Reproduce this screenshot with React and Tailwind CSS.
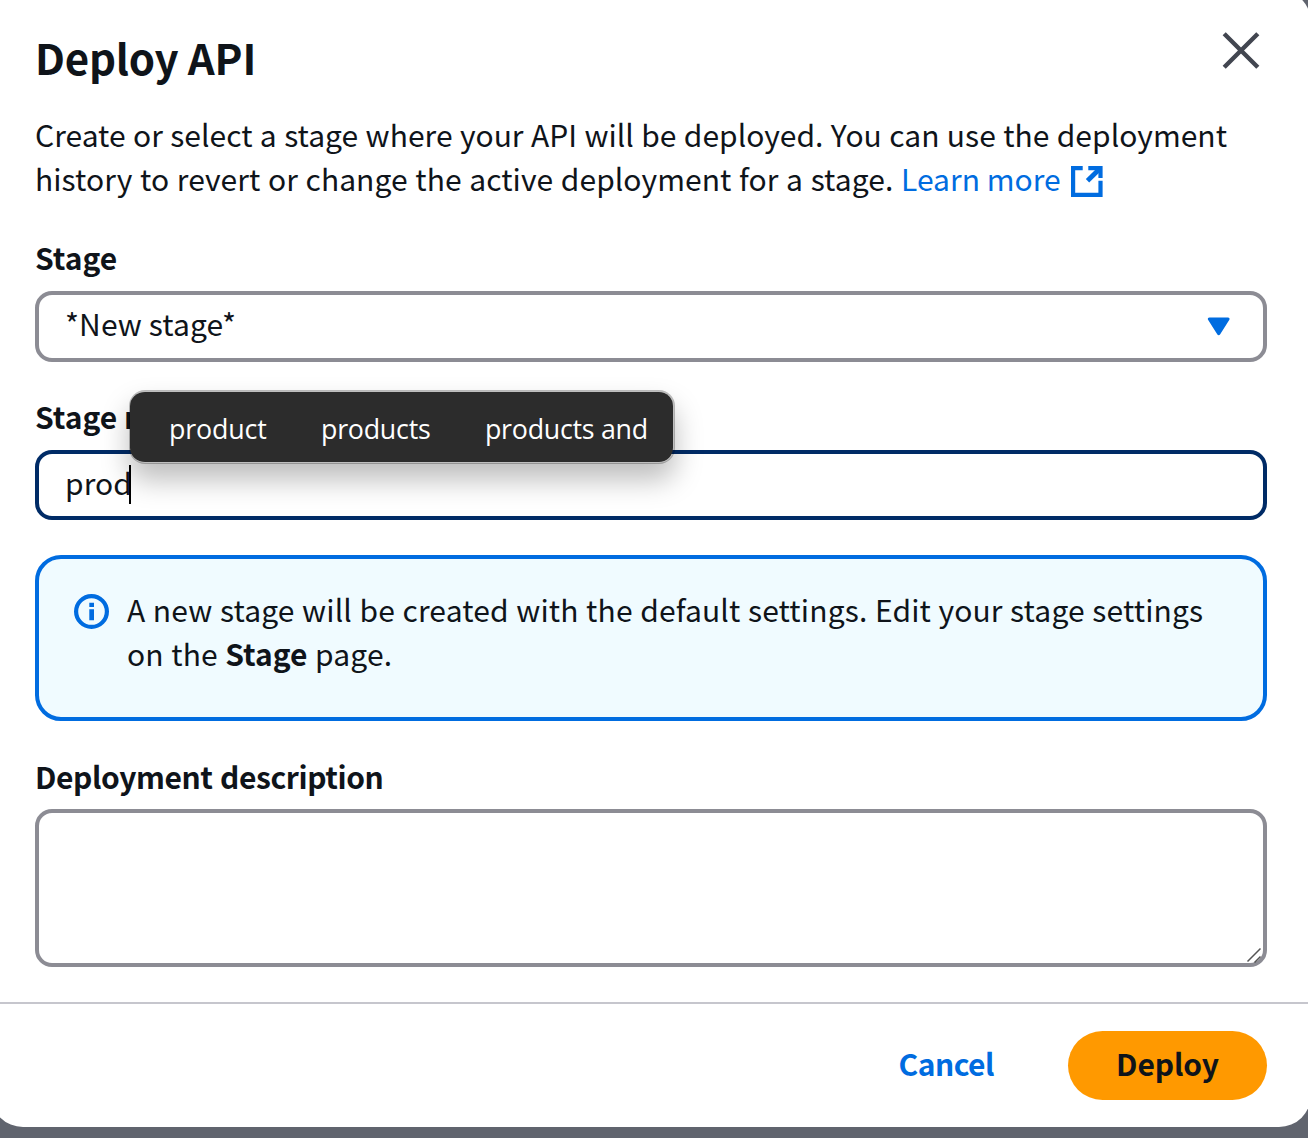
function CloseIcon() {
  return (
    <svg width="40" height="40" viewBox="0 0 40 40" fill="none" stroke="#424650" strokeWidth="4.4">
      <path d="M3.200 2.700 36.800 36.300M36.800 2.700 3.200 36.300" />
    </svg>
  );
}

function ExternalIcon() {
  return (
    <svg className="ml-[10px] inline-block align-[-6px]" width="32" height="31" viewBox="0 0 32 31" fill="none" stroke="#006ce0" strokeWidth="4.200">
      <path d="M11.700 2.100H2.100v26.800h27.400v-14.200" />
      <path d="M17.300 2.100h12.200v9.800" />
      <path d="M28.500 3 16.500 14.700" strokeWidth="4.800" />
    </svg>
  );
}

function InfoIcon() {
  return (
    <svg className="mt-[15px] shrink-0" width="35" height="35" viewBox="0 0 35 35" fill="none">
      <circle cx="17.500" cy="17.500" r="15.400" stroke="#006ce0" strokeWidth="4.200" />
      <path d="M15.300 8.800h4.700v4.300h-4.700zM15.300 15.200h4.700V26.200h-4.700z" fill="#006ce0" />
    </svg>
  );
}

function Suggestions() {
  return (
    <div className="absolute left-[94px] top-[-4px] z-10 flex h-[74px] w-[546px] rounded-[16px] border-2 border-l-[1px] border-black/25 bg-[#2c2c2c] bg-clip-padding pl-[39px] pt-[18px] font-['Open_Sans','Noto_Sans',sans-serif] text-[26.8px] leading-[38px] text-white shadow-[0_16px_28px_rgba(0,0,0,0.26)]">
      <span className="w-[152px] tracking-[-0.15px]">product</span>
      <span className="w-[164px] tracking-[-0.25px]">products</span>
      <span className="whitespace-nowrap tracking-[-0.27px]">products and</span>
    </div>
  );
}

export default function App() {
  return (
    <div className="h-[1138px] w-[1308px] overflow-hidden bg-[#60646e] font-['Noto_Sans_CJK_JP','Noto_Sans',sans-serif] text-[30px] leading-[44px] text-[#0f141a]">
      <div className="-ml-[9px] flow-root">
        <div className="-mt-[10px] flex h-[1137px] w-[1320px] flex-col rounded-[32px] bg-white">
          <div className="flex h-[1012px] flex-col pl-[44px] pr-[44px] pt-[41px]">
            <header className="flex h-[81px] items-start justify-between pr-[6px]">
              <h2 className="mt-px text-[42px] font-bold leading-[50px] tracking-[-0.2px]">Deploy API</h2>
              <button aria-label="Close"><CloseIcon /></button>
            </header>
            <p className="h-[88px] whitespace-nowrap">
              <span className="tracking-[0.02px] [word-spacing:0.65px]">Create or select a stage where your API will be deployed. You can use the deployment</span>
              <br />
              <span className="tracking-[0.05px] [word-spacing:0.9px]">history to revert or change the active deployment for a stage. </span>
              <a className="tracking-[0.03px] text-[#006ce0]">Learn more<ExternalIcon /></a>
            </p>

            <label className="mt-[35px] font-bold">Stage</label>
            <div className="mt-[12px] flex h-[71px] w-[1232px] shrink-0 items-center justify-between rounded-[17px] border-4 border-[#8c8c94] pl-[26px] pr-[32px]">
              <span className="-mt-[7px] tracking-[0.1px]">*New stage*</span>
              <svg width="24" height="20" viewBox="0 0 24 20" fill="#006ce0">
                <path d="M2.500 .5h18.400c1.500 0 2.200 1.400 1.300 2.600L13.200 17.300c-.8 1.200-2.200 1.200-3 0L1.200 3.100C.3 1.900 1 .5 2.500 .5Z" />
              </svg>
            </div>

            <div className="relative mt-[32px] h-[44px] shrink-0">
              <label className="font-bold">Stage name</label>
              <Suggestions />
            </div>
            <div className="mt-[12px] flex h-[70px] w-[1232px] shrink-0 items-center rounded-[17px] border-4 border-[#002b66] pl-[26px]">
              <span className="-mt-[6px] w-[64px] tracking-[0.05px]">prod</span>
              <span className="-mt-[2px] h-[39px] w-[2px] bg-black" />
            </div>

            <div className="mt-[35px] flex h-[166px] w-[1232px] shrink-0 gap-[18px] rounded-[26px] border-4 border-[#006ce0] bg-[#f0fbff] pl-[35px] pt-[20px]">
              <InfoIcon />
              <p className="mt-[8px] whitespace-nowrap tracking-[0.15px] [word-spacing:0.6px]">
                A new stage will be created with the default settings. Edit your stage settings
                <br />
                on the <b className="tracking-normal">Stage</b> page.
              </p>
            </div>

            <label className="mt-[33px] font-bold tracking-[-0.4px] [word-spacing:1px]">Deployment description</label>
            <div className="mt-[11px] flex h-[158px] w-[1232px] shrink-0 items-end justify-end rounded-[17px] border-4 border-[#8c8c94]">
              <svg className="mr-[1px]" width="16" height="16" viewBox="0 0 16 16" fill="none" stroke="#555" strokeWidth="1.500">
                <path d="M1.500 14.500 14.500 1.500M8.500 15.500l6-6" />
              </svg>
            </div>
          </div>

          <footer className="flex h-[125px] items-start justify-end border-t-2 border-[#c6c6cd] pr-[44px] pt-[27px] font-bold">
            <button className="mr-[74px] mt-[10px] tracking-[-0.5px] text-[#006ce0]">Cancel</button>
            <button className="h-[69px] w-[199px] rounded-full bg-[#ff9900] pb-[5px] tracking-[-0.1px]">Deploy</button>
          </footer>
        </div>
      </div>
    </div>
  );
}
